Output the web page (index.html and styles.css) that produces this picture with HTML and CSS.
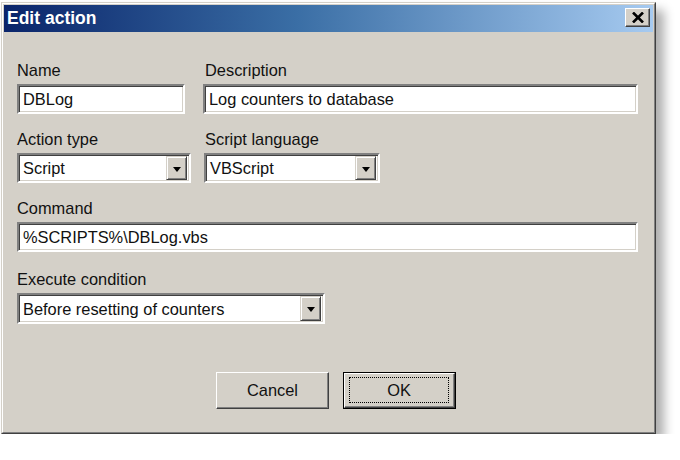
FILE: index.html
```html
<!DOCTYPE html>
<html>
<head>
<meta charset="utf-8">
<title>Edit action</title>
<link rel="stylesheet" href="styles.css">
</head>
<body>
<div class="stage">
  <div class="dialog">
    <div class="frame">
      <div class="titlebar">
        <span class="title">Edit action</span>
        <span class="close-btn">
          <svg width="12" height="11" viewBox="0 0 12 11"><path d="M1 0.5 L11 10.5 M11 0.5 L1 10.5" stroke="#000" stroke-width="2.6" fill="none"/></svg>
        </span>
      </div>
      <div class="content">
        <div class="row row1">
          <div class="field f-name">
            <div class="label">Name</div>
            <div class="input">DBLog</div>
          </div>
          <div class="field f-desc">
            <div class="label">Description</div>
            <div class="input">Log counters to database</div>
          </div>
        </div>
        <div class="row row2">
          <div class="field f-type">
            <div class="label">Action type</div>
            <div class="input combo"><span class="val">Script</span><span class="drop"><span class="tri"></span></span></div>
          </div>
          <div class="field f-lang">
            <div class="label">Script language</div>
            <div class="input combo"><span class="val">VBScript</span><span class="drop"><span class="tri"></span></span></div>
          </div>
        </div>
        <div class="row row3">
          <div class="field f-cmd">
            <div class="label">Command</div>
            <div class="input">%SCRIPTS%\DBLog.vbs</div>
          </div>
        </div>
        <div class="row row4">
          <div class="field f-exec">
            <div class="label">Execute condition</div>
            <div class="input combo tall"><span class="val">Before resetting of counters</span><span class="drop"><span class="tri"></span></span></div>
          </div>
        </div>
        <div class="buttons">
          <div class="btn"><span class="btn-inner">Cancel</span></div>
          <div class="btn default"><span class="btn-inner"><span class="focus">OK</span></span></div>
        </div>
      </div>
    </div>
  </div>
</div>
</body>
</html>
```
FILE: styles.css
```css
html, body {
  margin: 0;
  padding: 0;
  background: #ffffff;
}
body {
  font-family: "Liberation Sans", Arial, sans-serif;
  font-size: 16.4px;
  color: #111;
}
.stage {
  padding: 2px 0 0 1px;
}
.dialog {
  width: 655px;
  height: 432px;
  box-sizing: border-box;
  border: 1px solid;
  border-color: #d4d0c8 #404040 #404040 #d4d0c8;
  background: #d4d0c8;
  box-shadow: 8px 8px 10px rgba(0, 0, 0, 0.32);
}
.frame {
  height: 100%;
  box-sizing: border-box;
  border: 1px solid;
  border-color: #ffffff #808080 #808080 #ffffff;
  padding: 1px;
  display: flex;
  flex-direction: column;
}
.titlebar {
  height: 27px;
  background: linear-gradient(to right, #0a246a 0%, #3a6ea5 45%, #a6caf0 100%);
  display: flex;
  align-items: center;
  justify-content: space-between;
  padding: 0 3px 0 3px;
}
.title {
  color: #fff;
  font-weight: bold;
  font-size: 17.5px;
  line-height: 27px;
}
.close-btn {
  width: 25px;
  height: 19px;
  box-sizing: border-box;
  background: #d4d0c8;
  border: 1px solid;
  border-color: #ffffff #404040 #404040 #ffffff;
  box-shadow: inset -1px -1px 0 #808080;
  display: flex;
  align-items: center;
  justify-content: center;
  margin-top: -2px;
}
.content {
  padding: 29px 14px 0 13px;
}
.row {
  display: flex;
}
.label {
  line-height: 18px;
  height: 18px;
  margin-bottom: 5px;
}
.input {
  height: 30px;
  box-sizing: border-box;
  background: #fff;
  border: 2px solid;
  border-color: #808080 #ffffff #ffffff #808080;
  box-shadow: inset 1px 1px 0 #404040, inset -1px -1px 0 #d4d0c8;
  padding: 0 4px;
  line-height: 26px;
  white-space: nowrap;
  overflow: hidden;
}
.combo {
  display: flex;
  align-items: center;
  padding-right: 2px;
}
.combo.tall {
  height: 31px;
}
.val {
  flex: 1;
}
.drop {
  width: 21px;
  height: 24px;
  box-sizing: border-box;
  background: #d4d0c8;
  border: 1px solid;
  border-color: #d4d0c8 #404040 #404040 #d4d0c8;
  box-shadow: inset 1px 1px 0 #ffffff, inset -1px -1px 0 #808080;
  display: flex;
  align-items: center;
  justify-content: center;
}
.combo.tall .drop {
  height: 25px;
}
.tri {
  width: 0;
  height: 0;
  border-left: 4px solid transparent;
  border-right: 4px solid transparent;
  border-top: 5px solid #000;
  margin-top: 2px;
}
.row2 { margin-top: 16px; }
.row3 { margin-top: 16px; }
.row4 { margin-top: 18px; }
.f-name { width: 168px; margin-right: 18px; }
.f-desc { width: 435px; }
.f-desc .label { padding-left: 2px; }
.f-type { width: 174px; margin-right: 13px; }
.f-lang { width: 176px; }
.f-lang .label { padding-left: 1px; }
.f-cmd { width: 621px; }
.f-exec { width: 308px; }
.buttons {
  display: flex;
  gap: 14px;
  margin-top: 48px;
  padding-left: 199px;
}
.btn {
  width: 113px;
  height: 37px;
  box-sizing: border-box;
  border: 1px solid;
  border-color: #ffffff #404040 #404040 #ffffff;
  box-shadow: inset -1px -1px 0 #808080;
  display: flex;
  align-items: center;
  justify-content: center;
  background: #d4d0c8;
}
.btn-inner {
  display: flex;
  align-items: center;
  justify-content: center;
}
.btn.default {
  border: 1px solid #000;
  box-shadow: none;
  padding: 0;
}
.btn.default .btn-inner {
  width: 100%;
  height: 100%;
  box-sizing: border-box;
  border: 1px solid;
  border-color: #ffffff #404040 #404040 #ffffff;
  box-shadow: inset -1px -1px 0 #808080;
  padding: 3px 5px 4px 4px;
}
.focus {
  flex: 1;
  align-self: stretch;
  display: flex;
  align-items: center;
  justify-content: center;
  border: 1px dotted #000;
}
```
